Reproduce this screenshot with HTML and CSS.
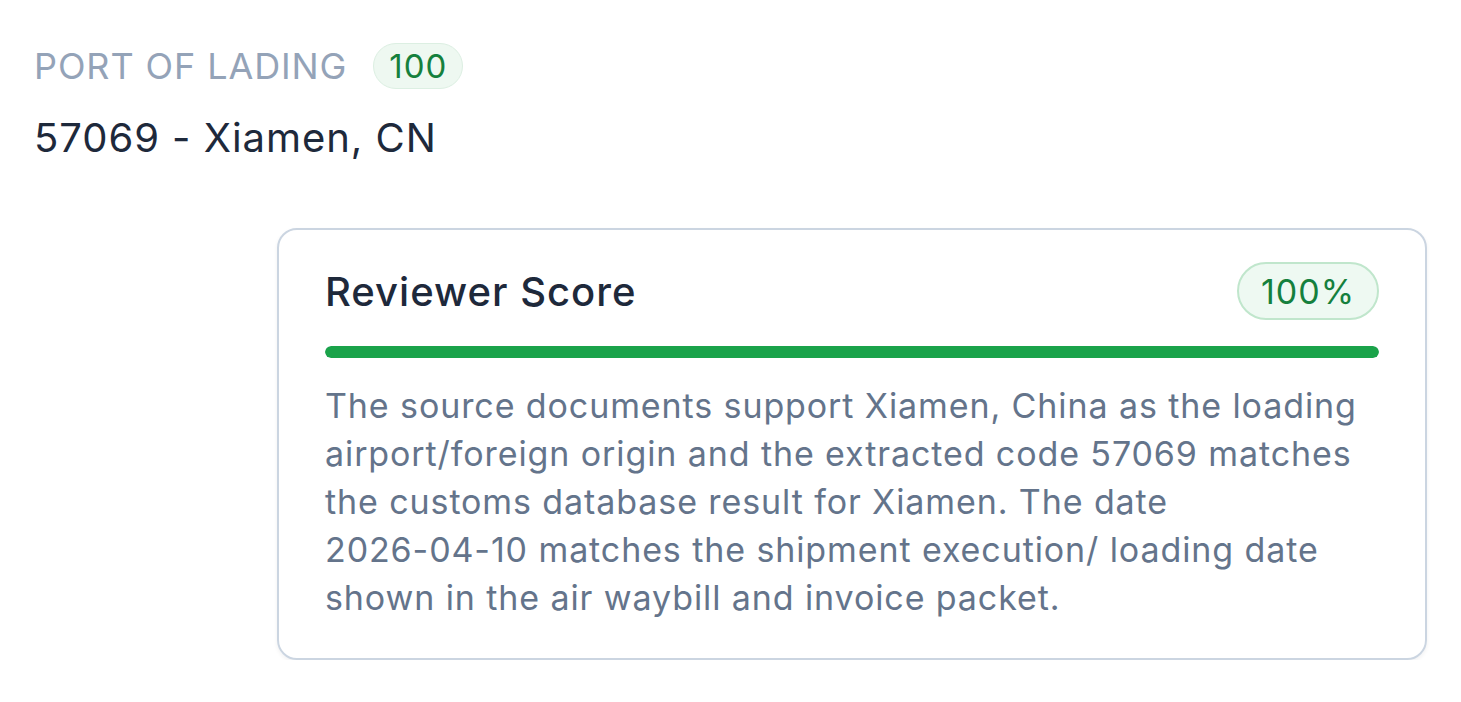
FILE: index.html
```html
<!DOCTYPE html>
<html>
<head>
<meta charset="utf-8">
<link rel="stylesheet" href="styles.css">
</head>
<body>
<div class="page">
  <div class="field">
    <div class="label-row">
      <span class="label">PORT OF LADING</span>
      <span class="chip">100</span>
    </div>
    <div class="value">57069 - Xiamen, CN</div>
  </div>
  <div class="card">
    <div class="card-head">
      <h2 class="card-title">Reviewer Score</h2>
      <span class="pct">100%</span>
    </div>
    <div class="bar"><div class="bar-fill" style="width:100%"></div></div>
    <p class="card-text">The source documents support Xiamen, China as the loading airport/foreign origin and the extracted code 57069 matches the customs database result for Xiamen. The date <span class="nowrap">2026-04-10</span> matches the shipment execution/ loading date shown in the air waybill and invoice packet.</p>
  </div>
</div>
</body>
</html>
```
FILE: styles.css
```css
html, body {
  margin: 0;
  padding: 0;
  background: #ffffff;
}
body {
  font-family: Inter, "Noto Sans", sans-serif;
}
.page {
  padding: 42px 34px 0 34px;
}
.field {
  display: flex;
  flex-direction: column;
  gap: 24px;
}
.label-row {
  display: flex;
  align-items: center;
  gap: 26px;
}
.label {
  font-size: 36px;
  letter-spacing: 0.9px;
  color: #94a3b8;
  line-height: 48px;
}
.chip {
  display: inline-flex;
  align-items: center;
  justify-content: center;
  box-sizing: border-box;
  height: 46px;
  min-width: 90px;
  padding: 0 12px;
  border-radius: 24px;
  background: #eef8f1;
  border: 1px solid #dcefe2;
  color: #15803d;
  font-size: 33px;
  letter-spacing: 1px;
}
.value {
  font-size: 40px;
  letter-spacing: 0.95px;
  line-height: 48px;
  color: #1e293b;
}
.card {
  margin: 66px 0 0 243px;
  width: 1150px;
  box-sizing: border-box;
  border: 2px solid #cbd5e1;
  border-radius: 20px;
  padding: 32px 46px 36px 46px;
  box-shadow: 0 2px 4px rgba(15, 23, 42, 0.06);
}
.card-head {
  display: flex;
  align-items: center;
  justify-content: space-between;
}
.card-title {
  margin: 0;
  font-weight: 500;
  font-size: 40px;
  letter-spacing: 1px;
  color: #1e293b;
}
.pct {
  display: inline-flex;
  align-items: center;
  justify-content: center;
  box-sizing: border-box;
  height: 58px;
  width: 142px;
  border-radius: 30px;
  background: #eef9f2;
  border: 2px solid #c0e6cc;
  color: #15803d;
  font-size: 34px;
  letter-spacing: 1px;
}
.bar {
  margin-top: 26px;
  height: 12px;
  border-radius: 6px;
  background: #e2e8f0;
  overflow: hidden;
}
.bar-fill {
  height: 100%;
  background: #1aa34a;
  border-radius: 6px;
}
.card-text {
  margin: 24px 0 0 0;
  font-size: 34px;
  letter-spacing: 0.9px;
  line-height: 48px;
  color: #64748b;
}
.nowrap {
  white-space: nowrap;
}
```
